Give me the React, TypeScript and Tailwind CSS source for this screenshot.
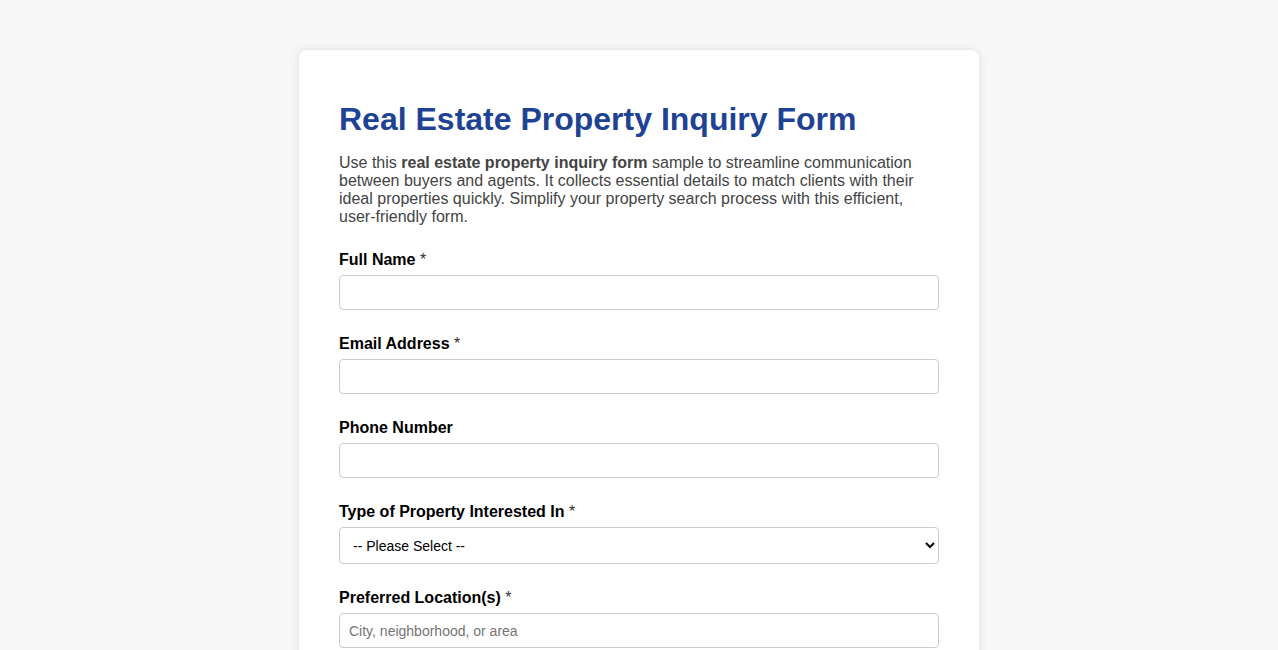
import React, { useState } from 'react';

const propertyTypes = ['House', 'Apartment', 'Condo', 'Townhouse', 'Land', 'Commercial'];

const Label = ({ htmlFor, required, children }: { htmlFor: string; required?: boolean; children: React.ReactNode }) => (
  <label htmlFor={htmlFor} className="block mb-[6px] text-[16px] leading-[18px] font-bold text-black">
    {children}
    {required && <span className="font-normal text-[#333]"> *</span>}
  </label>
);

const inputClass =
  'block w-full h-[35px] px-[9px] border border-[#cccccc] rounded-[4px] bg-white text-[14px] text-[#222] placeholder:text-[#757575] outline-none focus:border-[#1f4394]';

const App = () => {
  const [form, setForm] = useState({
    name: '',
    email: '',
    phone: '',
    type: '',
    location: '',
    budget: '',
    message: '',
  });

  const update = (key: keyof typeof form) => (e: React.ChangeEvent<HTMLInputElement | HTMLSelectElement | HTMLTextAreaElement>) =>
    setForm({ ...form, [key]: e.target.value });

  return (
    <div className="min-h-screen bg-[#f7f7f7] pt-[50px] pb-[50px] font-['Liberation_Sans',Arial,sans-serif]">
      <div className="w-[680px] mx-auto bg-white rounded-[8px] shadow-[0_0_10px_rgba(0,0,0,0.1)] px-[40px] pt-[51px] pb-[40px]">
        <h1 className="text-[32px] leading-[37px] font-bold text-[#1f4394]">Real Estate Property Inquiry Form</h1>
        <p className="mt-[16px] mb-[25px] text-[16px] leading-[18px] text-[#444]">
          Use this <strong className="font-bold">real estate property inquiry form</strong> sample to streamline communication
          between buyers and agents. It collects essential details to match clients with their ideal properties quickly.
          Simplify your property search process with this efficient, user-friendly form.
        </p>

        <form onSubmit={(e) => e.preventDefault()}>
          <div className="mb-[25px]">
            <Label htmlFor="name" required>Full Name</Label>
            <input id="name" type="text" className={inputClass} value={form.name} onChange={update('name')} />
          </div>

          <div className="mb-[25px]">
            <Label htmlFor="email" required>Email Address</Label>
            <input id="email" type="email" className={inputClass} value={form.email} onChange={update('email')} />
          </div>

          <div className="mb-[25px]">
            <Label htmlFor="phone">Phone Number</Label>
            <input id="phone" type="tel" className={inputClass} value={form.phone} onChange={update('phone')} />
          </div>

          <div className="mb-[25px]">
            <Label htmlFor="type" required>Type of Property Interested In</Label>
            <select
              id="type"
              className="block w-full h-[37px] pl-[9px] pr-[6px] border border-[#cccccc] rounded-[4px] bg-white text-[14px] text-black outline-none"
              value={form.type}
              onChange={update('type')}
            >
              <option value="">-- Please Select --</option>
              {propertyTypes.map((t) => (
                <option key={t} value={t}>
                  {t}
                </option>
              ))}
            </select>
          </div>

          <div className="mb-[25px]">
            <Label htmlFor="location" required>Preferred Location(s)</Label>
            <input
              id="location"
              type="text"
              placeholder="City, neighborhood, or area"
              className={inputClass}
              value={form.location}
              onChange={update('location')}
            />
          </div>

          <div className="mb-[25px]">
            <Label htmlFor="budget">Budget Range</Label>
            <input
              id="budget"
              type="text"
              placeholder="e.g. $300,000 - $450,000"
              className={inputClass}
              value={form.budget}
              onChange={update('budget')}
            />
          </div>

          <div className="mb-[25px]">
            <Label htmlFor="message">Additional Requirements</Label>
            <textarea
              id="message"
              rows={4}
              className="block w-full px-[9px] py-[8px] border border-[#cccccc] rounded-[4px] text-[14px] outline-none"
              value={form.message}
              onChange={update('message')}
            />
          </div>

          <button
            type="submit"
            className="px-[20px] py-[10px] rounded-[4px] bg-[#1f4394] text-white text-[16px] font-bold"
          >
            Submit Inquiry
          </button>
        </form>
      </div>
    </div>
  );
};

export default App;
